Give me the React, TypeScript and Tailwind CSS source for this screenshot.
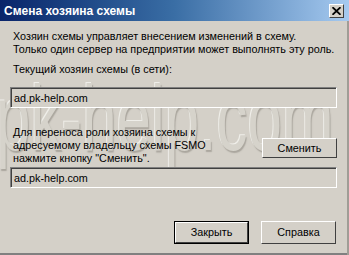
import React from "react";

const font = { fontFamily: '"Liberation Sans", Arial, sans-serif' };

const Field = ({ value, className = "" }: { value: string; className?: string }) => (
  <div
    className={`shrink-0 flex items-center h-[21px] bg-[#d4d0c8] border border-t-[#808080] border-l-[#808080] border-b-white border-r-white text-black ${className}`}
  >
    <span className="border-l border-t border-[#404040] pl-[2px] h-full flex items-center w-full">{value}</span>
  </div>
);

const Button = ({ label, primary = false }: { label: string; primary?: boolean }) => (
  <div className={`shrink-0 ${primary ? "border border-black" : ""}`}>
    <div
      className={`flex items-center justify-center bg-[#d4d0c8] border border-t-white border-l-white border-b-[#404040] border-r-[#404040] text-black ${
        primary ? "w-[73px] h-[21px]" : "w-[75px] h-[23px]"
      }`}
    >
      {label}
    </div>
  </div>
);

export default function App() {
  return (
    <div style={font} className="relative w-[349px] h-[255px] overflow-hidden bg-[#d4d0c8] flex flex-col select-none">
      {/* watermark, sits behind the dialog content */}
      <div
        className="absolute left-[-4px] top-[72px] text-[62px] leading-none text-[#d6d3cb] pointer-events-none origin-top scale-y-150 whitespace-nowrap"
        style={{ textShadow: "1px 1px 1px #aaa69e, -1px -1px 0 #efeee9" }}
      >
        pk-help.com
      </div>

      {/* title bar */}
      <div className="relative shrink-0 h-[21px] flex items-center justify-between pl-[4px] pr-[5px] bg-gradient-to-r from-[#0a246a] via-[#3a6ea5] to-[#a6caf0]">
        <span className="text-white font-bold text-[12px] leading-none">Смена хозяина схемы</span>
        <div className="w-[15px] h-[14px] bg-[#d4d0c8] border border-t-white border-l-white border-b-[#404040] border-r-[#404040] flex items-center justify-center">
          <svg width="9" height="8" viewBox="0 0 9 8">
            <path d="M0.5 0.2 L8.5 7.8 M8.5 0.2 L0.5 7.8" stroke="black" strokeWidth="1.8" fill="none" />
          </svg>
        </div>
      </div>

      {/* body */}
      <div className="relative flex-1 flex flex-col pl-[10px] pr-[12px] text-[10.8px] leading-[13px] text-black whitespace-nowrap">
        <div className="mt-[9px] pl-[3px]">
          <div>Хозяин схемы управляет внесением изменений в схему.</div>
          <div>Только один сервер на предприятии может выполнять эту роль.</div>
        </div>
        <div className="mt-[7px] pl-[3px]">Текущий хозяин схемы (в сети):</div>
        <Field value="ad.pk-help.com" className="mt-[11px]" />

        <div className="shrink-0 mt-[18px] flex items-start justify-between">
          <div className="pl-[3px]">
            <div>Для переноса роли хозяина схемы к</div>
            <div>адресуемому владельцу схемы FSMO</div>
            <div>нажмите кнопку "Сменить".</div>
          </div>
          <div className="mt-[12px] flex items-center justify-center w-[75px] h-[20px] bg-[#d4d0c8] border border-t-white border-l-white border-b-[#404040] border-r-[#404040]">
            Сменить
          </div>
        </div>

        <Field value="ad.pk-help.com" className="mt-[2px]" />

        <div className="shrink-0 mt-[33px] flex justify-end gap-[12px] pr-[1px]">
          <Button label="Закрыть" primary />
          <Button label="Справка" />
        </div>
      </div>
      <div className="relative shrink-0 h-[2px] bg-[#808080]" />
      <div className="absolute right-0 top-[21px] bottom-0 w-[2px] bg-[#a09d96]" />
    </div>
  );
}
